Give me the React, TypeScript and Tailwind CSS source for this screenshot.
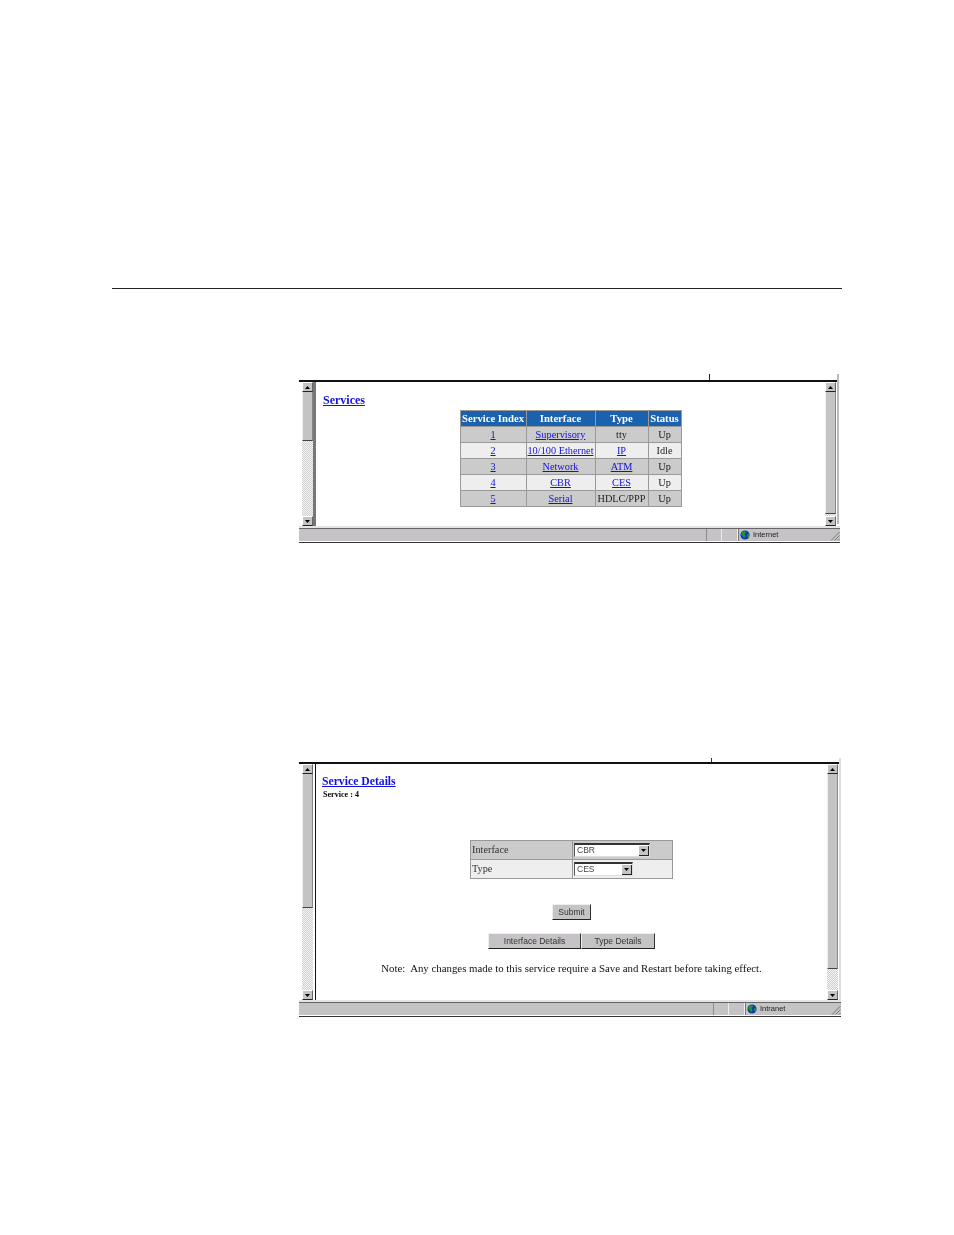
const serif = "font-['Liberation_Serif',serif]";
const sans = "font-['Liberation_Sans',sans-serif]";

const services = [
  { index: "1", iface: "Supervisory", type: "tty", typeLink: false, status: "Up" },
  { index: "2", iface: "10/100 Ethernet", type: "IP", typeLink: true, status: "Idle" },
  { index: "3", iface: "Network", type: "ATM", typeLink: true, status: "Up" },
  { index: "4", iface: "CBR", type: "CES", typeLink: true, status: "Up" },
  { index: "5", iface: "Serial", type: "HDLC/PPP", typeLink: false, status: "Up" },
];

function Arrow({ down }: { down?: boolean }) {
  return (
    <svg width="5" height="3" viewBox="0 0 5 3" className={down ? "rotate-180" : ""}>
      <path d="M2.5 0L5 3H0z" fill="#000" />
    </svg>
  );
}

function ScrollButton({ down }: { down?: boolean }) {
  return (
    <div className="h-[10px] shrink-0 flex items-center justify-center bg-[#c6c3c6] border-t border-l border-t-white border-l-white border-r border-b border-r-[#666] border-b-[#222]">
      <Arrow down={down} />
    </div>
  );
}

function ScrollBar({ thumb, track }: { thumb: string; track: string }) {
  return (
    <div className="w-[11px] shrink-0 flex flex-col">
      <ScrollButton />
      <div className={`${thumb} shrink-0 bg-[#c6c3c6] border-l border-l-[#eee] border-r border-r-[#888] border-b border-b-[#444]`} />
      <div className={`${track} bg-[repeating-conic-gradient(#d0d0d0_0_25%,#f4f4f4_0_50%)] bg-[length:2px_2px]`} />
      <ScrollButton down />
    </div>
  );
}

function Globe() {
  return (
    <svg width="10" height="10" viewBox="0 0 10 10" className="shrink-0">
      <circle cx="5" cy="5" r="4.6" fill="#1638b8" />
      <path d="M2 2.2L5 1l1 1.6L4.6 4 5.6 6 4 8.6 2.8 6 1 4.6z" fill="#1c9a2c" />
      <path d="M7 4l2.2.4L9 7 7.4 7.6z" fill="#1c9a2c" />
    </svg>
  );
}

function Grip() {
  return (
    <svg width="10" height="10" viewBox="0 0 10 10" className="shrink-0 self-end">
      <path d="M9.5 1L1 9.5M9.5 4.5L4.5 9.5M9.5 8L8 9.5" stroke="#777" strokeWidth="1" fill="none" />
    </svg>
  );
}

function StatusBar({ lastCell, label }: { lastCell: string; label: string }) {
  return (
    <div>
      <div className="h-[2px] bg-[#e4e4e4]" />
      <div className="h-px bg-[#666]" />
      <div className="h-[12px] bg-[#c6c3c6] flex">
        <div className="flex-1" />
        <div className="w-[16px] border-l border-l-[#8a8a8a] border-r border-r-[#eee]" />
        <div className="w-[16px] border-r border-r-[#eee]" />
        <div className={`${lastCell} flex items-center pl-px border-l border-l-[#777]`}>
          <Globe />
          <span className={`${sans} ml-[3px] text-[7.5px] leading-none text-[#222]`}>{label}</span>
          <div className="flex-1" />
          <Grip />
        </div>
      </div>
      <div className="h-px bg-white" />
      <div className="h-px bg-[#333]" />
    </div>
  );
}

function Link({ children }: { children: React.ReactNode }) {
  return <a className="text-[#1010e0] underline">{children}</a>;
}

function Select({ label, width }: { label: string; width: string }) {
  return (
    <div className={`${width} h-[14px] flex items-center bg-white border-t-2 border-l border-t-[#333] border-l-[#555] border-r border-b border-r-[#ddd] border-b-[#ddd]`}>
      <span className={`${sans} pl-[2px] flex-1 text-[8.5px] leading-none text-[#444]`}>{label}</span>
      <div className="w-[10px] h-[10px] flex items-center justify-center bg-[#c6c3c6] border-r border-b border-r-[#222] border-b-[#222]">
        <Arrow down />
      </div>
    </div>
  );
}

function Button({ label, width }: { label: string; width: string }) {
  return (
    <div className={`${width} ${sans} h-[16px] flex items-center justify-center bg-[#c6c3c6] border-t border-l border-t-[#eee] border-l-[#eee] border-r border-b border-r-[#333] border-b-[#222] text-[8.5px] leading-none text-[#333]`}>
      {label}
    </div>
  );
}

export default function App() {
  const th = "border border-[#999] bg-[#1a62ad] p-0 text-[10.7px] leading-none font-bold text-white";
  const td = "border border-[#999] p-0 pt-px text-center text-[10.3px] leading-none text-[#222]";

  return (
    <div className={`${serif} h-[1235px] overflow-hidden bg-white pt-[288px]`}>
      <div className="ml-[112px] w-[730px] h-px bg-[#222]" />

      {/* Services window */}
      <div className="relative ml-[299px] mt-[91px] w-[541px] blur-[0.3px]">
        <div className="absolute left-[410px] top-[-6px] h-[6px] w-px bg-[#222]" />
        <div className="absolute left-[538px] top-[-6px] h-[150px] w-[2px] bg-[#bbb]" />
        <div className="h-[2px] w-[538px] bg-[#111]" />
        <div className="flex h-[144px]">
          <div className="w-[3px] shrink-0" />
          <ScrollBar thumb="h-[49px]" track="flex-1" />
          <div className="w-[3px] shrink-0 bg-[#777]" />
          <div className="flex-1 min-w-0">
            <div className="pl-[7px] pt-[11px] text-[12px] leading-[14px] font-bold">
              <Link>Services</Link>
            </div>
            <table className="mx-auto mt-[3px] table-fixed border-collapse">
              <thead>
                <tr className="h-[16px]">
                  <th className={`${th} w-[66px]`}>Service Index</th>
                  <th className={`${th} w-[69px]`}>Interface</th>
                  <th className={`${th} w-[53px]`}>Type</th>
                  <th className={`${th} w-[33px]`}>Status</th>
                </tr>
              </thead>
              <tbody>
                {services.map((row, i) => (
                  <tr key={row.index} className={`h-[16px] ${i % 2 === 0 ? "bg-[#cbcbcb]" : "bg-[#eeeeee]"}`}>
                    <td className={td}><Link>{row.index}</Link></td>
                    <td className={td}><Link>{row.iface}</Link></td>
                    <td className={td}>{row.typeLink ? <Link>{row.type}</Link> : row.type}</td>
                    <td className={td}>{row.status}</td>
                  </tr>
                ))}
              </tbody>
            </table>
          </div>
          <ScrollBar thumb="h-[122px]" track="flex-1" />
          <div className="w-[4px] shrink-0" />
        </div>
        <StatusBar lastCell="w-[102px]" label="Internet" />
      </div>

      {/* Service details window */}
      <div className="relative ml-[299px] mt-[219px] w-[542px] blur-[0.3px]">
        <div className="absolute left-[412px] top-[-4px] h-[4px] w-px bg-[#333]" />
        <div className="absolute left-[540px] top-[-4px] h-[242px] w-[2px] bg-[#ddd]" />
        <div className="h-[2px] w-[540px] bg-[#111]" />
        <div className="flex h-[236px]">
          <div className="w-[3px] shrink-0" />
          <ScrollBar thumb="h-[134px]" track="flex-1" />
          <div className="w-[2px] shrink-0" />
          <div className="w-[1px] shrink-0 bg-[#111]" />
          <div className="flex-1 min-w-0">
            <div className="pl-[6px] pt-[11px] text-[11.7px] leading-[14px] font-bold">
              <Link>Service Details</Link>
            </div>
            <div className="pl-[7px] mt-px text-[8.1px] leading-[10px] font-bold text-black">Service : 4</div>
            <table className="mx-auto mt-[40px] table-fixed border-collapse">
              <tbody>
                <tr className="h-[19px] bg-[#cbcbcb]">
                  <td className="w-[102px] border border-[#999] p-0 pl-px text-[10.3px] leading-none text-[#333]">Interface</td>
                  <td className="w-[100px] border border-[#999] p-0 pl-px"><Select label="CBR" width="w-[76px]" /></td>
                </tr>
                <tr className="h-[19px] bg-[#eeeeee]">
                  <td className="border border-[#999] p-0 pl-px text-[10.3px] leading-none text-[#333]">Type</td>
                  <td className="border border-[#999] p-0 pl-px"><Select label="CES" width="w-[59px]" /></td>
                </tr>
              </tbody>
            </table>
            <div className="mt-[25px] flex justify-center">
              <Button label="Submit" width="w-[39px]" />
            </div>
            <div className="mt-[13px] flex justify-center">
              <Button label="Interface Details" width="w-[93px]" />
              <Button label="Type Details" width="w-[74px]" />
            </div>
            <p className="mt-[13px] whitespace-pre text-center text-[10.84px] leading-[12px] text-[#111]">
              {"Note:  Any changes made to this service require a Save and Restart before taking effect."}
            </p>
          </div>
          <ScrollBar thumb="h-[195px]" track="flex-1" />
          <div className="w-[3px] shrink-0" />
        </div>
        <StatusBar lastCell="w-[96px]" label="Intranet" />
      </div>
    </div>
  );
}
